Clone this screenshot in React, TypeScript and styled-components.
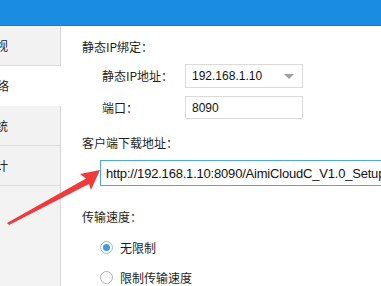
import React from "react";
import styled, { createGlobalStyle } from "styled-components";

const Global = createGlobalStyle`
  html, body { margin: 0; padding: 0; background: #fff; }
  body {
    width: 381px; height: 286px; overflow: hidden;
    font-family: "Noto Sans CJK SC", "Liberation Sans", sans-serif;
    color: #1e1e1e;
  }
`;

const Page = styled.div`
  position: relative;
  width: 381px;
  height: 286px;
  display: flex;
  flex-direction: column;
  overflow: hidden;
`;

const TitleBar = styled.div`
  height: 25px;
  flex: none;
  background: #1a8de2;
  border-bottom: 1px solid #2f76ad;
`;

const Body = styled.div`
  flex: 1;
  display: flex;
  min-height: 0;
`;

const Sidebar = styled.div`
  width: 60px;
  flex: none;
  background: #f3f3f3;
  border-right: 1px solid #d6d6d6;
  display: flex;
  flex-direction: column;
`;

const Tab = styled.div<{ $active?: boolean }>`
  height: 39px;
  flex: none;
  display: flex;
  align-items: center;
  justify-content: flex-end;
  padding-right: 52px;
  white-space: nowrap;
  font-size: 12px;
  background: ${(p) => (p.$active ? "#fff" : "#f2f2f2")};
  border-bottom: 1px solid ${(p) => (p.$active ? "#fff" : "#dcdcdc")};
  margin-right: ${(p) => (p.$active ? "-1px" : "0")};
  color: #222;
`;

const Content = styled.div`
  flex: 1;
  padding: 12px 0 0 21px;
  display: flex;
  flex-direction: column;
  min-width: 0;
  overflow: hidden;
  & > * { flex-shrink: 0; }
`;

const SectionTitle = styled.div<{ $mt?: number }>`
  font-size: 12px;
  line-height: 18px;
  margin-top: ${(p) => p.$mt ?? 0}px;
`;

const FieldRow = styled.div<{ $mt?: number }>`
  display: flex;
  align-items: center;
  padding-left: 20px;
  margin-top: ${(p) => p.$mt ?? 0}px;
`;

const FieldLabel = styled.div`
  width: 83px;
  font-size: 12px;
  line-height: 18px;
`;

const Box = styled.div<{ $h: number }>`
  width: 118px;
  height: ${(p) => p.$h}px;
  border: 1px solid #dadada;
  display: flex;
  align-items: center;
  padding: 0 6px;
  box-sizing: border-box;
  font-family: "Liberation Sans", sans-serif;
  font-size: 12px;
  color: #111;
  justify-content: space-between;
`;

const Caret = styled.span`
  width: 0;
  height: 0;
  border-left: 5px solid transparent;
  border-right: 5px solid transparent;
  border-top: 5px solid #a0a0a0;
  margin-right: 2px;
`;

const UrlBox = styled.div`
  margin: 8px 0 0 18px;
  height: 26px;
  border: 1px solid #4ea6d9;
  border-right: none;
  box-sizing: border-box;
  display: flex;
  align-items: center;
  padding-left: 5px;
  white-space: nowrap;
  overflow: hidden;
  font-family: "Liberation Sans", sans-serif;
  font-size: 13px;
  letter-spacing: -0.2px;
  color: #111;
`;

const RadioList = styled.div`
  margin-top: 6px;
  display: flex;
  flex-direction: column;
`;

const RadioRow = styled.div`
  height: 30px;
  flex: none;
  display: flex;
  align-items: center;
  padding-left: 18px;
  gap: 7px;
  font-size: 12px;
`;

const RadioDot = styled.span<{ $on?: boolean }>`
  width: 13px;
  height: 13px;
  box-sizing: border-box;
  border-radius: 50%;
  border: 1px solid ${(p) => (p.$on ? "#9ab8d2" : "#b0b0b0")};
  background: #fff;
  display: flex;
  align-items: center;
  justify-content: center;
  &::after {
    content: "";
    width: 7px;
    height: 7px;
    border-radius: 50%;
    background: ${(p) => (p.$on ? "#3d9ae6" : "transparent")};
  }
`;

const Annotation = styled.svg`
  position: absolute;
  left: 0;
  top: 0;
  pointer-events: none;
`;

export default function App() {
  return (
    <Page>
      <Global />
      <TitleBar />
      <Body>
        <Sidebar>
          <Tab>监视</Tab>
          <Tab $active>网络</Tab>
          <Tab>系统</Tab>
          <Tab>统计</Tab>
        </Sidebar>
        <Content>
          <SectionTitle>静态IP绑定：</SectionTitle>
          <FieldRow $mt={8}>
            <FieldLabel>静态IP地址：</FieldLabel>
            <Box $h={24}>
              <span>192.168.1.10</span>
              <Caret />
            </Box>
          </FieldRow>
          <FieldRow $mt={8}>
            <FieldLabel>端口：</FieldLabel>
            <Box $h={23}>
              <span>8090</span>
            </Box>
          </FieldRow>
          <SectionTitle $mt={15}>客户端下载地址：</SectionTitle>
          <UrlBox>http://192.168.1.10:8090/AimiCloudC_V1.0_Setup.exe</UrlBox>
          <SectionTitle $mt={22}>传输速度：</SectionTitle>
          <RadioList>
            <RadioRow>
              <RadioDot $on />
              <span>无限制</span>
            </RadioRow>
            <RadioRow>
              <RadioDot />
              <span>限制传输速度</span>
            </RadioRow>
          </RadioList>
        </Content>
      </Body>
      <Annotation width="381" height="286" viewBox="0 0 381 286">
        <polygon
          points="7,223 86,178.5 80,174 100,170 91,190 89,184 9,225"
          fill="#ee3b3b"
        />
      </Annotation>
    </Page>
  );
}
